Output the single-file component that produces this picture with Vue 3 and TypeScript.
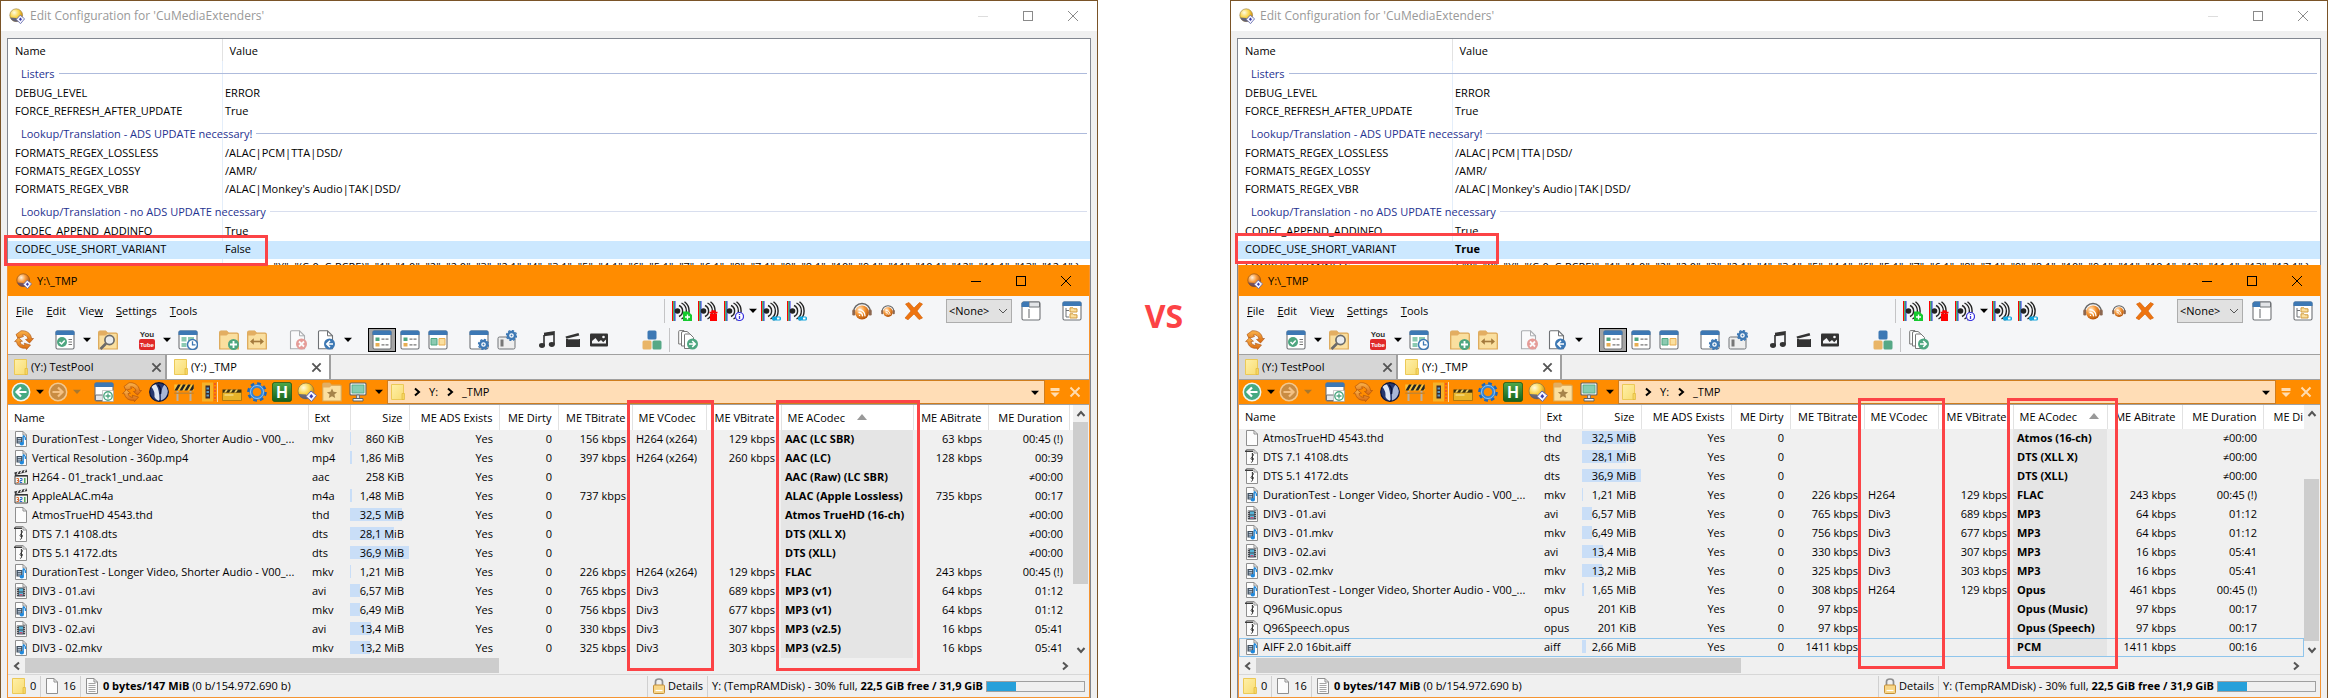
<script setup lang="ts">
interface ConfigLine {
  kind: 'group' | 'item' | 'selected'
  name: string
  value?: string
  faint?: boolean
}

interface MediaFile {
  icon: string
  name: string
  ext: string
  size: string
  bar: number
  tbr?: string
  vcodec?: string
  vbr?: string
  acodec: string
  abr?: string
  duration: string
  focused?: boolean
}

interface Panel {
  id: string
  config: ConfigLine[]
  files: MediaFile[]
  extraColumn: boolean
}

interface Tool {
  kind: 'btn' | 'drop' | 'gap' | 'sep' | 'wide-gap'
  icon?: string
  label?: string
  slot?: string
}

const btn = (icon: string, label: string, slot = 's28'): Tool => ({ kind: 'btn', icon, label, slot })
const drop = (label: string, slot = 'd15'): Tool => ({ kind: 'drop', label, slot })
const gap: Tool = { kind: 'gap' }
const wideGap: Tool = { kind: 'wide-gap' }
const sep: Tool = { kind: 'sep' }

const mediaTools: Tool[] = [
  sep,
  btn('sig-add', 'Add metadata', 's26'),
  btn('sig-del', 'Delete metadata', 's26'),
  btn('sig-info', 'Metadata info', 's26'),
  drop('More metadata commands', 'd11'),
  btn('sig-on', 'Toggle columns', 's26'),
  btn('sig-on', 'Toggle details', 's26'),
]

const playTools: Tool[] = [
  btn('phones', 'Play', 's26'),
  btn('phones-small', 'Play next', 's26'),
  btn('cross', 'Stop', 's26'),
]

const mainTools: Tool[] = [
  btn('refresh', 'Refresh'),
  gap,
  btn('win-check', 'Select'),
  drop('Select menu'),
  btn('folder-find', 'Find'),
  gap,
  btn('youtube', 'YouTube', 's24'),
  drop('YouTube menu'),
  btn('win-clock', 'Recent'),
  gap,
  btn('folder-add', 'New folder'),
  btn('folder-size', 'Calculate size'),
  gap,
  btn('doc-del', 'Delete'),
  btn('doc-undo', 'Undo'),
  drop('Undo menu'),
  gap,
  btn('win-list', 'Details view', 's28 pressed'),
  btn('win-list', 'List view'),
  btn('win-thumbs', 'Thumbnails view'),
  gap,
  btn('win-gear', 'Preferences'),
  btn('doc-gear', 'Folder options'),
  gap,
  btn('music', 'Music', 's26'),
  btn('clapper', 'Video', 's26'),
  btn('picture', 'Pictures', 's26'),
  wideGap,
  btn('blocks', 'Layouts'),
  sep,
  btn('docs-go', 'Copy to'),
]

const pathTools: Tool[] = [
  btn('back', 'Back', 's24'),
  drop('Back history', 'd13'),
  btn('forward', 'Forward', 's24 dim'),
  drop('Forward history', 'd13 dim'),
  btn('win-add', 'New window', 's28 indent'),
  btn('refresh', 'Refresh', 's28'),
  btn('vlogo', 'Viewer', 's25'),
  btn('barrier', 'Work in progress', 's25'),
  btn('film', 'Film tool', 's23'),
  btn('clap-yellow', 'Clips', 's25'),
  btn('gear', 'Settings', 's25'),
  btn('hkey', 'Hotkeys', 's25'),
  btn('ball', 'Script', 's25'),
  btn('folder-star', 'Favorites', 's25'),
  btn('monitor', 'This PC', 's28'),
  drop('Computer menu', 'd13'),
]

const makeConfig = (variant: string): ConfigLine[] => [
  { kind: 'group', name: 'Listers' },
  { kind: 'item', name: 'DEBUG_LEVEL', value: 'ERROR' },
  { kind: 'item', name: 'FORCE_REFRESH_AFTER_UPDATE', value: 'True' },
  { kind: 'group', name: 'Lookup/Translation - ADS UPDATE necessary!' },
  { kind: 'item', name: 'FORMATS_REGEX_LOSSLESS', value: '/ALAC|PCM|TTA|DSD/' },
  { kind: 'item', name: 'FORMATS_REGEX_LOSSY', value: '/AMR/' },
  { kind: 'item', name: 'FORMATS_REGEX_VBR', value: "/ALAC|Monkey's Audio|TAK|DSD/" },
  { kind: 'group', name: 'Lookup/Translation - no ADS UPDATE necessary', faint: true },
  { kind: 'item', name: 'CODEC_APPEND_ADDINFO', value: 'True' },
  { kind: 'selected', name: 'CODEC_USE_SHORT_VARIANT', value: variant },
  {
    kind: 'item',
    name: 'LOOKUP_CHANNELS',
    value: '{ "0": "0",  "X": "(C-0, C-PCRE)",  "1": "1.0",  "2": "2.0",  "3": "2.1",  "4": "3.1",  "5": "4.1",  "6": "5.1",  "7": "6.1",  "8": "7.1",  "9": "8.1",  "10": "9.1",  "11": "10.1",  "12": "11.1",  "13": "12.1" }',
  },
]

const longName = 'DurationTest - Longer Video, Shorter Audio - V00_...'

const leftFiles: MediaFile[] = [
  { icon: 'f-mkv', name: longName, ext: 'mkv', size: '860 KiB', bar: 2, tbr: '156 kbps', vcodec: 'H264 (x264)', vbr: '129 kbps', acodec: 'AAC (LC SBR)', abr: '63 kbps', duration: '00:45 (!)' },
  { icon: 'f-mkv', name: 'Vertical Resolution - 360p.mp4', ext: 'mp4', size: '1,86 MiB', bar: 4, tbr: '397 kbps', vcodec: 'H264 (x264)', vbr: '260 kbps', acodec: 'AAC (LC)', abr: '128 kbps', duration: '00:39' },
  { icon: 'f-aac', name: 'H264 - 01_track1_und.aac', ext: 'aac', size: '258 KiB', bar: 0, acodec: 'AAC (Raw) (LC SBR)', duration: '≠00:00' },
  { icon: 'f-aac', name: 'AppleALAC.m4a', ext: 'm4a', size: '1,48 MiB', bar: 4, tbr: '737 kbps', acodec: 'ALAC (Apple Lossless)', abr: '735 kbps', duration: '00:17' },
  { icon: 'f-blank', name: 'AtmosTrueHD 4543.thd', ext: 'thd', size: '32,5 MiB', bar: 88, acodec: 'Atmos TrueHD (16-ch)', duration: '≠00:00' },
  { icon: 'f-dts', name: 'DTS 7.1 4108.dts', ext: 'dts', size: '28,1 MiB', bar: 75, acodec: 'DTS (XLL X)', duration: '≠00:00' },
  { icon: 'f-dts', name: 'DTS 5.1 4172.dts', ext: 'dts', size: '36,9 MiB', bar: 100, acodec: 'DTS (XLL)', duration: '≠00:00' },
  { icon: 'f-mkv', name: longName, ext: 'mkv', size: '1,21 MiB', bar: 2, tbr: '226 kbps', vcodec: 'H264 (x264)', vbr: '129 kbps', acodec: 'FLAC', abr: '243 kbps', duration: '00:45 (!)' },
  { icon: 'f-avi', name: 'DIV3 - 01.avi', ext: 'avi', size: '6,57 MiB', bar: 17, tbr: '765 kbps', vcodec: 'Div3', vbr: '689 kbps', acodec: 'MP3 (v1)', abr: '64 kbps', duration: '01:12' },
  { icon: 'f-mkv', name: 'DIV3 - 01.mkv', ext: 'mkv', size: '6,49 MiB', bar: 17, tbr: '756 kbps', vcodec: 'Div3', vbr: '677 kbps', acodec: 'MP3 (v1)', abr: '64 kbps', duration: '01:12' },
  { icon: 'f-avi', name: 'DIV3 - 02.avi', ext: 'avi', size: '13,4 MiB', bar: 36, tbr: '330 kbps', vcodec: 'Div3', vbr: '307 kbps', acodec: 'MP3 (v2.5)', abr: '16 kbps', duration: '05:41' },
  { icon: 'f-mkv', name: 'DIV3 - 02.mkv', ext: 'mkv', size: '13,2 MiB', bar: 34, tbr: '325 kbps', vcodec: 'Div3', vbr: '303 kbps', acodec: 'MP3 (v2.5)', abr: '16 kbps', duration: '05:41' },
]

const rightFiles: MediaFile[] = [
  { icon: 'f-blank', name: 'AtmosTrueHD 4543.thd', ext: 'thd', size: '32,5 MiB', bar: 88, acodec: 'Atmos (16-ch)', duration: '≠00:00' },
  { icon: 'f-dts', name: 'DTS 7.1 4108.dts', ext: 'dts', size: '28,1 MiB', bar: 75, acodec: 'DTS (XLL X)', duration: '≠00:00' },
  { icon: 'f-dts', name: 'DTS 5.1 4172.dts', ext: 'dts', size: '36,9 MiB', bar: 100, acodec: 'DTS (XLL)', duration: '≠00:00' },
  { icon: 'f-mkv', name: longName, ext: 'mkv', size: '1,21 MiB', bar: 2, tbr: '226 kbps', vcodec: 'H264', vbr: '129 kbps', acodec: 'FLAC', abr: '243 kbps', duration: '00:45 (!)' },
  { icon: 'f-avi', name: 'DIV3 - 01.avi', ext: 'avi', size: '6,57 MiB', bar: 17, tbr: '765 kbps', vcodec: 'Div3', vbr: '689 kbps', acodec: 'MP3', abr: '64 kbps', duration: '01:12' },
  { icon: 'f-mkv', name: 'DIV3 - 01.mkv', ext: 'mkv', size: '6,49 MiB', bar: 17, tbr: '756 kbps', vcodec: 'Div3', vbr: '677 kbps', acodec: 'MP3', abr: '64 kbps', duration: '01:12' },
  { icon: 'f-avi', name: 'DIV3 - 02.avi', ext: 'avi', size: '13,4 MiB', bar: 36, tbr: '330 kbps', vcodec: 'Div3', vbr: '307 kbps', acodec: 'MP3', abr: '16 kbps', duration: '05:41' },
  { icon: 'f-mkv', name: 'DIV3 - 02.mkv', ext: 'mkv', size: '13,2 MiB', bar: 34, tbr: '325 kbps', vcodec: 'Div3', vbr: '303 kbps', acodec: 'MP3', abr: '16 kbps', duration: '05:41' },
  { icon: 'f-mkv', name: longName, ext: 'mkv', size: '1,65 MiB', bar: 3, tbr: '308 kbps', vcodec: 'H264', vbr: '129 kbps', acodec: 'Opus', abr: '461 kbps', duration: '00:45 (!)' },
  { icon: 'f-dts', name: 'Q96Music.opus', ext: 'opus', size: '201 KiB', bar: 0, tbr: '97 kbps', acodec: 'Opus (Music)', abr: '97 kbps', duration: '00:17' },
  { icon: 'f-dts', name: 'Q96Speech.opus', ext: 'opus', size: '201 KiB', bar: 0, tbr: '97 kbps', acodec: 'Opus (Speech)', abr: '97 kbps', duration: '00:17' },
  { icon: 'f-mkv', name: 'AIFF 2.0 16bit.aiff', ext: 'aiff', size: '2,66 MiB', bar: 7, tbr: '1411 kbps', acodec: 'PCM', abr: '1411 kbps', duration: '00:16', focused: true },
]

const panels: Panel[] = [
  { id: 'long', config: makeConfig('False'), files: leftFiles, extraColumn: false },
  { id: 'short', config: makeConfig('True'), files: rightFiles, extraColumn: true },
]
</script>

<template>
  <main class="page">
    <svg class="defs" aria-hidden="true">
      <defs>
        <radialGradient id="gYellow" cx="35%" cy="30%" r="75%">
          <stop offset="0" stop-color="#fffbe0" /><stop offset=".5" stop-color="#fbd54a" /><stop offset="1" stop-color="#c07a00" />
        </radialGradient>
        <radialGradient id="gOrange" cx="35%" cy="30%" r="75%">
          <stop offset="0" stop-color="#fff0dc" /><stop offset=".45" stop-color="#f89a3a" /><stop offset="1" stop-color="#b04c00" />
        </radialGradient>
        <linearGradient id="gFolder" x1="0" y1="0" x2="1" y2="1">
          <stop offset="0" stop-color="#fff0a8" /><stop offset="1" stop-color="#f8dc72" />
        </linearGradient>
        <linearGradient id="gGreen" x1="0" y1="0" x2="0" y2="1">
          <stop offset="0" stop-color="#4fa84a" /><stop offset="1" stop-color="#15611b" />
        </linearGradient>
        <linearGradient id="gArrow" x1="0" y1="0" x2="0" y2="1">
          <stop offset="0" stop-color="#fbb44c" /><stop offset="1" stop-color="#d8660c" />
        </linearGradient>
      </defs>

      <symbol id="ball" viewBox="0 0 20 20">
        <circle cx="9" cy="9" r="8" fill="url(#gYellow)" stroke="#8d7440" stroke-width=".7" />
        <path d="M1.500 12a8 8 0 0 0 10 4.600L9 12.500Z" fill="#3f4f8c" opacity=".75" />
        <path d="M14 9l5.500 4.500L14.500 19.500 9 14.500Z" fill="#f4f5ff" stroke="#5d64a8" stroke-width="1" />
        <path d="M14.300 12l1.900 2.200-1.900 2.200-1.900-2.200Z" fill="#3c3fae" />
      </symbol>
      <symbol id="ball-orange" viewBox="0 0 20 20">
        <circle cx="9" cy="9" r="8" fill="url(#gOrange)" stroke="#7b4518" stroke-width=".7" />
        <path d="M1.500 12a8 8 0 0 0 10 4.600L9 12.500Z" fill="#4e4170" opacity=".7" />
        <path d="M14 9l5.500 4.500L14.500 19.500 9 14.500Z" fill="#f4f5ff" stroke="#5d64a8" stroke-width="1" />
        <path d="M14.300 12l1.900 2.200-1.900 2.200-1.900-2.200Z" fill="#3c3fae" />
      </symbol>

      <symbol id="refresh" viewBox="0 0 20 20">
        <path d="M4 8.500 2 4.500 7 .8C12 .2 17 3 17.500 8.500L19.500 8.500 15.500 13 11.500 9.500 14 9C13.500 6 11 4.500 8.500 4.800L9.500 6.500Z" fill="url(#gArrow)" stroke="#a84c08" stroke-width=".6" />
        <path d="M.6 11.500 4.400 7.800 8.500 11.200 6 11.600C6.400 14 8.500 15.600 11 15.200L10.200 13.200 16.500 15 12.500 19.600 12 18.200C7 19 3 16 2.600 11.800Z" fill="url(#gArrow)" stroke="#a84c08" stroke-width=".6" />
      </symbol>

      <symbol id="win" viewBox="0 0 20 20">
        <rect x="1" y="1" width="18" height="18" rx="1.500" fill="#fff" stroke="#6f7276" stroke-width="1.100" />
        <path d="M.5 5V2Q.5.5 2 .5H18Q19.500.5 19.500 2V5Z" fill="#3d78b4" />
      </symbol>
      <symbol id="win-check" viewBox="0 0 20 20">
        <use href="#win" />
        <circle cx="7" cy="12" r="5" fill="#4da680" />
        <path d="M4.500 12l2 2 3.200-3.600" fill="none" stroke="#fff" stroke-width="1.500" />
        <path d="M13.500 9.500h3.500M13.500 12h3.500M13.500 14.500h3.500" stroke="#777" />
      </symbol>
      <symbol id="folder" viewBox="0 0 20 20">
        <path d="M.7 19V2.500Q.7 1 2 1H7.500L9.500 3.200H18Q19.300 3.200 19.300 4.500V19Z" fill="#fadf9f" stroke="#dba552" stroke-width="1.200" />
        <path d="M1 5.500V2Q1 1 2 1H7.500L9.800 3.500 7.500 5.500Z" fill="#e3ae62" />
      </symbol>
      <symbol id="folder-find" viewBox="0 0 20 20">
        <use href="#folder" />
        <circle cx="11.500" cy="10" r="4.600" fill="#e9ecef" stroke="#6b6b6b" stroke-width="1.700" />
        <path d="M8 13.500 2.500 19" stroke="#6b6b6b" stroke-width="2.600" />
      </symbol>
      <symbol id="youtube" viewBox="0 0 20 20">
        <rect x="2" y="9" width="16" height="11" rx="2" fill="#e02a2a" />
      </symbol>
      <symbol id="win-clock" viewBox="0 0 20 20">
        <use href="#win" />
        <path d="M3.500 7h5v4.500h-5zM10 7h6v4.500h-6zM3.500 13h5v4h-5z" fill="#8ccab2" />
        <circle cx="14.500" cy="14.500" r="5" fill="#fff" stroke="#3d78b4" stroke-width="1.500" />
        <path d="M14.500 11.300v3.500h3" fill="none" stroke="#3d78b4" stroke-width="1.300" />
      </symbol>
      <symbol id="folder-add" viewBox="0 0 20 20">
        <use href="#folder" />
        <circle cx="14.500" cy="14.500" r="5.500" fill="#4da680" />
        <path d="M14.500 11v7M11 14.500h7" stroke="#fff" stroke-width="1.800" />
      </symbol>
      <symbol id="folder-size" viewBox="0 0 20 20">
        <use href="#folder" />
        <path d="M5 11.500h10" stroke="#a47a3c" stroke-width="1.600" />
        <path d="M3 11.500 6.800 8.300v6.400ZM17 11.500 13.200 8.300v6.400Z" fill="#a47a3c" />
      </symbol>
      <symbol id="sheet" viewBox="0 0 20 20">
        <path d="M2.500 18.800V2Q2.500.8 3.700.8H11.500L16.500 5.800V18.800Z" fill="#fff" stroke="#6f7276" stroke-width="1.100" />
        <path d="M11.500.8V5.800H16.500" fill="none" stroke="#6f7276" />
      </symbol>
      <symbol id="doc-del" viewBox="0 0 20 20">
        <g opacity=".55">
          <use href="#sheet" />
          <circle cx="13.500" cy="14" r="5.500" fill="#d9534a" />
          <path d="M11 11.500l5 5M16 11.500l-5 5" stroke="#fff" stroke-width="1.800" />
        </g>
      </symbol>
      <symbol id="doc-undo" viewBox="0 0 20 20">
        <use href="#sheet" />
        <circle cx="13.500" cy="14" r="5.500" fill="#3d78b4" />
        <path d="M17 14h-5.500M14 10.800 10.800 14l3.200 3.200" fill="none" stroke="#fff" stroke-width="1.600" />
      </symbol>
      <symbol id="win-list" viewBox="0 0 20 20">
        <use href="#win" />
        <path d="M3.500 7.500h4v3.500h-4z" fill="#4da680" /><path d="M3.500 13h4v3.500h-4z" fill="#e8ae52" />
        <path d="M9.500 9.200h3M13.500 9.200h3M9.500 14.800h3M13.500 14.800h3" stroke="#777" stroke-width="1.200" />
      </symbol>
      <symbol id="win-thumbs" viewBox="0 0 20 20">
        <use href="#win" />
        <path d="M3 8.500h6v6.500h-6z" fill="#8ccab2" stroke="#4da680" /><path d="M11 8.500h6v6.500h-6z" fill="#fadf9f" stroke="#e8ae52" />
      </symbol>
      <symbol id="cog" viewBox="0 0 20 20">
        <circle cx="14.500" cy="14.500" r="5" fill="none" stroke="#3d78b4" stroke-width="1.300" stroke-dasharray="2.200 1.700" />
        <circle cx="14.500" cy="14.500" r="3.500" fill="#fff" stroke="#3d78b4" stroke-width="2.400" />
        <circle cx="14.500" cy="14.500" r="1" fill="#3d78b4" />
      </symbol>
      <symbol id="win-gear" viewBox="0 0 20 20">
        <use href="#win" /><use href="#cog" />
      </symbol>
      <symbol id="doc-gear" viewBox="0 0 20 20">
        <rect x="1" y="7" width="17" height="12" rx="1.500" fill="#eee" stroke="#6f7276" />
        <rect x="3.500" y="9.500" width="3" height="7" fill="#777" />
        <use href="#cog" y="-9" />
      </symbol>
      <symbol id="music" viewBox="0 0 20 20">
        <path d="M7 3.500 17 2v12.500" fill="none" stroke="#333" stroke-width="1.600" /><path d="M7 3.200 17 2v3L7 6.300Z" fill="#333" />
        <path d="M7 5v11" stroke="#333" stroke-width="1.600" />
        <ellipse cx="5" cy="15.500" rx="3" ry="2.400" fill="#333" /><ellipse cx="14.800" cy="14.500" rx="3" ry="2.400" fill="#333" />
      </symbol>
      <symbol id="clapper" viewBox="0 0 20 20">
        <path d="M3 9h14v8H3z" fill="#333" /><path d="M2.500 6.500 15.500 3l.8 2.500L3.300 8.800Z" fill="#333" />
        <path d="M5 9.500h11" stroke="#999" stroke-width=".6" />
      </symbol>
      <symbol id="picture" viewBox="0 0 20 20">
        <rect x="1" y="3.500" width="18" height="13" rx="1" fill="#333" />
        <path d="M3 13.500V11l3.500-3 3 4 2.500-2 2.200 2.200L17 9.500v4Z" fill="#f4f5f7" /><circle cx="14.500" cy="7" r="1.300" fill="#f4f5f7" />
      </symbol>
      <symbol id="blocks" viewBox="0 0 20 20">
        <rect x="5.500" y=".5" width="9" height="9" rx="1.500" fill="#3d78b4" />
        <rect x=".5" y="10.500" width="9" height="9" rx="1.500" fill="#e9b567" /><rect x="10.500" y="10.500" width="9" height="9" rx="1.500" fill="#56a886" />
      </symbol>
      <symbol id="docs-go" viewBox="0 0 20 20">
        <path d="M.7 14V1.500Q.7.600 1.600.6H6l2 2V14Z" fill="#fff" stroke="#777" /><path d="M3.500 16V3Q3.500 1.500 5 1.500H9l2.500 2V16Z" fill="#fff" stroke="#777" />
        <path d="M6.500 18.500V5Q6.500 4 7.500 4H12l3.500 3.500V18.500Z" fill="#fff" stroke="#777" />
        <circle cx="14.500" cy="14" r="5.500" fill="#4da680" />
        <path d="M11 14h5.500M14.200 11l3 3-3 3" fill="none" stroke="#fff" stroke-width="1.600" />
      </symbol>

      <symbol id="signal" viewBox="0 0 20 20">
        <path d="M.5 0v20" stroke="#f00" stroke-width="1.500" /><path d="M2 0v20" stroke="#24b04a" stroke-width="1.500" /><path d="M3 0v20" stroke="#2430e8" stroke-width="1" />
        <circle cx="5.500" cy="10" r="2.800" fill="#222" />
        <path d="M7 4.500a6 6 0 0 1 0 11M9.500 2a9 9 0 0 1 0 16M12.500.8a11.500 11.500 0 0 1 0 18.400" fill="none" stroke="#222" stroke-width="1.400" />
      </symbol>
      <symbol id="sig-add" viewBox="0 0 20 20">
        <use href="#signal" /><path d="M11 20v-9.500h5l4 3.500v6Z" fill="#15c92f" /><path d="M15.500 13.500v5M13 16h5" stroke="#fff" stroke-width="1.300" />
      </symbol>
      <symbol id="sig-del" viewBox="0 0 20 20">
        <use href="#signal" /><path d="M11.500 11.500h8M13.500 10h4" stroke="#f00" stroke-width="1.600" /><path d="M12 12.500h7V20h-7Z" fill="#f00" />
      </symbol>
      <symbol id="sig-info" viewBox="0 0 20 20">
        <use href="#signal" /><circle cx="15.500" cy="15.500" r="4" fill="#fff" stroke="#3a34e0" stroke-width="1.200" /><path d="M15.500 13v1M15.500 15v3" stroke="#3a34e0" stroke-width="1.300" />
      </symbol>
      <symbol id="sig-on" viewBox="0 0 20 20">
        <use href="#signal" /><rect x="11" y="15.500" width="9" height="4" rx="1.500" fill="#12a6de" /><rect x="16" y="16.500" width="2.500" height="2" fill="#fff" />
      </symbol>
      <symbol id="phones" viewBox="0 0 20 20">
        <path d="M1.500 11a8.500 8.500 0 0 1 17 0" fill="none" stroke="#666" stroke-width="1.500" />
        <rect x=".3" y="8.500" width="3" height="6" rx="1.300" fill="#8c6750" /><rect x="16.700" y="8.500" width="3" height="6" rx="1.300" fill="#8c6750" />
        <circle cx="10" cy="11.500" r="6.900" fill="url(#gOrange)" />
        <path d="M7.500 14.300v.1M7 11.500a3.500 3.500 0 0 1 3.500 3.300M7 8.700a6 6 0 0 1 6 6.100" fill="none" stroke="#fff" stroke-width="1.300" stroke-linecap="round" />
      </symbol>
      <symbol id="phones-small" viewBox="0 0 20 20"><use href="#phones" x="3" y="3" width="14" height="14" /></symbol>
      <symbol id="cross" viewBox="0 0 20 20">
        <path d="M1.500 3 5 1.500 10 7 15.500 1.500 18.500 3 13 10 18.500 17 15 18.500 10 13 4 18.800 1 17 7 10Z" fill="#ee7410" stroke="#cf5c02" stroke-width=".6" />
      </symbol>
      <symbol id="layout" viewBox="0 0 20 20">
        <rect x="1" y="1" width="18" height="18" rx="1.500" fill="#fff" stroke="#6f7276" stroke-width="1.100" />
        <path d="M8 1h10.500v5H8Z" fill="#e3e5e8" stroke="#6f7276" /><path d="M.5 6V2.500L2.500.5H8V6Z" fill="#3d78b4" /><path d="M8 8v9" stroke="#6f7276" stroke-width="1.100" />
      </symbol>
      <symbol id="tree" viewBox="0 0 20 20">
        <use href="#win" />
        <path d="M4 7v9h3M4 9.500h3" fill="none" stroke="#6f7276" /><path d="M8 6.800h3l1 1h3V11H8ZM8 12.800h3l1 1h3V17H8Z" fill="#fadf9f" stroke="#d19b3e" />
      </symbol>

      <symbol id="back" viewBox="0 0 20 20">
        <circle cx="10" cy="10" r="8.700" fill="#46a982" stroke="#eef8f3" stroke-width="1.500" />
        <path d="M15.500 10H6M10 5.500 5.500 10 10 14.500" fill="none" stroke="#fff" stroke-width="2.200" />
      </symbol>
      <symbol id="forward" viewBox="0 0 20 20">
        <circle cx="10" cy="10" r="8.700" fill="#c98c42" stroke="#f2c890" stroke-width="1.500" />
        <path d="M4.500 10H14M10 5.500 14.500 10 10 14.500" fill="none" stroke="#f4c183" stroke-width="2.200" />
      </symbol>
      <symbol id="win-add" viewBox="0 0 20 20">
        <use href="#win" /><path d="M1.500 13h8v5.500h-8z" fill="#e3e5e8" stroke="#6f7276" />
        <path d="M8.500 8.500h11v11h-11z" fill="#fff" stroke="#999" stroke-width=".5" />
        <circle cx="14" cy="14" r="4.200" fill="#fff" stroke="#4da680" stroke-width="1.400" /><path d="M14 11.500v5M11.500 14h5" stroke="#4da680" stroke-width="1.300" />
      </symbol>
      <symbol id="vlogo" viewBox="0 0 20 20">
        <circle cx="10" cy="10" r="9.300" fill="#27386f" stroke="#0b1338" stroke-width="1.200" />
        <path d="M2.500 5Q4.500 2 7 2.500 10.500 8 10.500 17.500L9.500 18.800Q6.500 17.500 5.500 15 6 9 2.500 5Z" fill="#dfe6f3" />
        <path d="M12 18.500Q11 7 15.500 2.800 18.500 5 18.800 9 18.500 16 12 18.500Z" fill="#a9b6d6" />
        <path d="M9 3Q12.500 6 11.500 12" fill="none" stroke="#0b1338" stroke-width="1.500" />
      </symbol>
      <symbol id="barrier" viewBox="0 0 20 20">
        <path d="M3.500 9v10M16.500 9v10" stroke="#b8b0a4" stroke-width="2" />
        <path d="M.3 2.500h19.400v6H.3z" fill="#f8c23c" /><path d="M.5 8.500 4 2.500h2.800L3.300 8.500ZM5.500 8.500 9 2.500h2.800L8.300 8.500ZM10.500 8.500 14 2.500h2.800L13.300 8.500ZM15.500 8.500 19 2.500h.7v4L18.300 8.500Z" fill="#222" />
        <path d="M.3 10.500h19.400v1.500H.3z" fill="#c9852a" />
      </symbol>
      <symbol id="film" viewBox="0 0 20 20">
        <path d="M4 .5h11v19H4z" fill="#f5b22a" /><path d="M7.500 3.500h4.500v13H7.500z" fill="#3b2c2c" /><path d="M8.500 5.500h2.500v2H8.500zM8.500 9h2.500v2H8.500zM8.500 12.500h2.500v2H8.500z" fill="#5d9bc4" />
        <path d="M17 1v18" stroke="#f05a24" stroke-width="2" stroke-dasharray="2 1.500" /><path d="M19.500 0v20" stroke="#ffd9ab" />
      </symbol>
      <symbol id="clap-yellow" viewBox="0 0 20 20">
        <path d="M.5 10.500h19V18.500H.5z" fill="#e8b429" stroke="#a06e0c" stroke-width=".8" /><path d="M.5 7.500h19v3H.5z" fill="#3a3213" />
        <path d="M2 10.500l2-3h2l-2 3ZM7 10.500l2-3h2l-2 3ZM12 10.500l2-3h2l-2 3Z" fill="#f1cf5f" /><path d="M2.500 13h9" stroke="#f8e08c" stroke-width="1.300" />
      </symbol>
      <symbol id="gear" viewBox="0 0 20 20">
        <circle cx="10" cy="10" r="8.300" fill="none" stroke="#1d66b8" stroke-width="3" stroke-dasharray="3.600 2.900" />
        <circle cx="10" cy="10" r="6" fill="#ff8c00" stroke="#2f82d6" stroke-width="3.400" /><circle cx="10" cy="10" r="6.500" fill="none" stroke="#9bcbf6" stroke-width=".9" />
      </symbol>
      <symbol id="hkey" viewBox="0 0 20 20">
        <rect x=".4" y=".4" width="19.200" height="19.200" rx="2.500" fill="url(#gGreen)" stroke="#135719" stroke-width=".8" />
      </symbol>
      <symbol id="folder-star" viewBox="0 0 20 20">
        <use href="#folder" /><path d="M10 6.500l1.500 3.300 3.600.4-2.700 2.400.8 3.500L10 14.300l-3.200 1.800.8-3.500L4.900 10.200l3.600-.4Z" fill="#a6834a" />
      </symbol>
      <symbol id="monitor" viewBox="0 0 20 20">
        <rect x="2" y="1" width="16" height="12" rx="1" fill="#f2f2f2" stroke="#5f6468" stroke-width="1.100" /><path d="M4 3h12v8H4z" fill="#86cdb1" stroke="#4da680" stroke-width=".8" />
        <path d="M8.500 13h3v3.500h-3z" fill="#ddd" stroke="#5f6468" stroke-width=".8" /><path d="M5 16.500h10v2.500H5z" fill="#f2f2f2" stroke="#5f6468" />
      </symbol>

      <symbol id="dir" viewBox="0 0 14 16">
        <path d="M.5.500H12.500V15.500H.5Z" fill="url(#gFolder)" stroke="#ecc957" /><path d="M11 9.500h2.500V15.500H11Z" fill="#f6d660" stroke="#e0b73c" stroke-width=".7" />
      </symbol>
      <symbol id="f-blank" viewBox="0 0 14 16">
        <path d="M1.500.500H9L12.500 4V15.500H1.500Z" fill="#fcfcfc" stroke="#8f8f8f" /><path d="M9 .5V4h3.500" fill="none" stroke="#8f8f8f" />
      </symbol>
      <symbol id="f-text" viewBox="0 0 14 16">
        <use href="#f-blank" /><path d="M3.500 5.500h7M3.500 7.500h7M3.500 9.500h7M3.500 11.500h7M3.500 13.500h7" stroke="#a5a5a5" />
      </symbol>
      <symbol id="f-mkv" viewBox="0 0 14 16">
        <use href="#f-blank" /><path d="M2.500 6h6v6.500h-6z" fill="#3f4d5c" /><path d="M3.800 7.500h3.400M3.800 9.300h3.400M3.800 11h3.400" stroke="#cfe0f0" stroke-width=".9" />
        <path d="M9.200 4.500v8M9.200 4.500q2.800 1.500 2.300 4.500" fill="none" stroke="#1e88dc" stroke-width="1.300" /><ellipse cx="7.800" cy="12.700" rx="2.200" ry="1.700" fill="#1e88dc" />
      </symbol>
      <symbol id="f-avi" viewBox="0 0 14 16">
        <use href="#f-blank" /><path d="M2.800 4.500h8.400v9H2.800z" fill="#41454c" /><path d="M5 5.500h4v3H5zM5 9.500h4v3H5z" fill="#58b4d8" /><path d="M5.500 11h3v1.500h-3z" fill="#d0567a" />
        <path d="M3.800 5v8.500M10.200 5v8.500" stroke="#ddd" stroke-dasharray="1 1" />
      </symbol>
      <symbol id="f-aac" viewBox="0 0 14 16">
        <path d="M.3 3.500 12.500.5l.7 2.500L1 6Z" fill="#333" /><path d="M3 5l1.500-3M6.500 4.200 8 1.200M10 3.500l1.500-3" stroke="#eee" stroke-width="1.200" />
        <path d="M1 6.500h12.500V15H1z" fill="#f2f2ee" stroke="#444" /><path d="M1 6h12.500v1.600H1z" fill="#333" />
        <path d="M2.500 9.500h2v4h-2M3 11.500h1.500" fill="none" stroke="#e06b2c" /><path d="M6 9.500h2v2H6v2h2.200" fill="none" stroke="#2b6fd0" /><path d="M10.800 9v5" stroke="#35a03c" stroke-width="1.300" />
      </symbol>
      <symbol id="f-dts" viewBox="0 0 14 16">
        <use href="#f-blank" /><path d="M0 1.500h8v1.500H0z" fill="#3a3a3a" /><path d="M7.300 4q2.400 2-.3 4-2 2 0 2.800 1.900.3 1.400-1.400-.8-.8-1.600.3M7.300 4 7.600 12.500q-.7 1.300-1.700.5" fill="none" stroke="#2a2a2a" stroke-width=".9" />
      </symbol>
      <symbol id="lock" viewBox="0 0 14 16">
        <path d="M3.500 8V3.500Q3.500 1 7 1t3.500 2.500V8" fill="none" stroke="#8e8e8e" stroke-width="1.700" /><rect x="1.500" y="7" width="11" height="8.500" rx="1" fill="#f8d687" stroke="#c48f38" /><path d="M3.500 12.500h7" stroke="#fff" stroke-width="1.200" />
      </symbol>
      <symbol id="x-bold" viewBox="0 0 12 12"><path d="M1.500 1.500l9 9M10.500 1.500l-9 9" fill="none" stroke="currentColor" stroke-width="2" /></symbol>
      <symbol id="chev" viewBox="0 0 10 10"><path d="M3 1.500 7 5 3 8.500" fill="none" stroke="currentColor" stroke-width="2" /></symbol>
      <symbol id="tri" viewBox="0 0 10 6"><path d="M1 .8h8L5 5Z" fill="currentColor" /></symbol>
    </svg>

    <template v-for="(panel, index) in panels" :key="panel.id">
      <p v-if="index === 1" class="versus">VS</p>

      <section class="panel" :class="panel.id">
        <header class="config-title">
          <svg class="app-icon"><use href="#ball" /></svg>
          <h1>Edit Configuration for 'CuMediaExtenders'</h1>
          <div class="controls muted">
            <button type="button" aria-label="Minimize"><svg class="ctl"><path class="faint" d="M0 5.500h10" /></svg></button>
            <button type="button" aria-label="Maximize"><svg class="ctl"><rect x=".5" y=".5" width="9" height="9" /></svg></button>
            <button type="button" aria-label="Close"><svg class="ctl"><path d="M0 0l10 10M10 0 0 10" /></svg></button>
          </div>
        </header>

        <div class="config-frame">
          <div class="config-list">
            <table class="config">
              <colgroup><col class="c-key" /><col /></colgroup>
              <thead>
                <tr><th scope="col">Name</th><th scope="col" class="val-head">Value</th></tr>
              </thead>
              <tbody>
                <template v-for="line in panel.config" :key="line.name">
                  <tr v-if="line.kind === 'group'" class="group">
                    <th colspan="2" scope="rowgroup">
                      <span class="group-line" :class="{ pale: line.faint }">{{ line.name }}</span>
                    </th>
                  </tr>
                  <tr v-else :class="line.kind">
                    <td>{{ line.name }}</td>
                    <td>{{ line.value }}</td>
                  </tr>
                </template>
              </tbody>
            </table>
          </div>

          <div class="lister">
            <header class="lister-title">
              <svg class="app-icon"><use href="#ball-orange" /></svg>
              <h2>Y:\_TMP</h2>
              <div class="controls">
                <button type="button" aria-label="Minimize"><svg class="ctl"><path d="M0 5.500h10" /></svg></button>
                <button type="button" aria-label="Maximize"><svg class="ctl"><rect x=".5" y=".5" width="9" height="9" /></svg></button>
                <button type="button" aria-label="Close"><svg class="ctl"><path d="M0 0l10 10M10 0 0 10" /></svg></button>
              </div>
            </header>

            <div class="bars">
              <div class="bar-row">
                <nav class="menu" aria-label="Menu">
                  <button type="button"><u>F</u>ile</button>
                  <button type="button"><u>E</u>dit</button>
                  <button type="button">Vie<u>w</u></button>
                  <button type="button"><u>S</u>ettings</button>
                  <button type="button"><u>T</u>ools</button>
                </nav>
                <div class="tools right-tools">
                  <template v-for="(tool, i) in mediaTools" :key="i">
                    <span v-if="tool.kind === 'sep'" class="sep"></span>
                    <button v-else type="button" :class="['tool', tool.slot]" :aria-label="tool.label">
                      <svg v-if="tool.kind === 'btn'" class="ico"><use :href="'#' + tool.icon" /></svg>
                      <svg v-else class="tri"><use href="#tri" /></svg>
                    </button>
                  </template>
                </div>
                <div class="tools play-tools">
                  <button v-for="tool in playTools" :key="tool.icon" type="button" :class="['tool', tool.slot]" :aria-label="tool.label">
                    <svg class="ico"><use :href="'#' + tool.icon" /></svg>
                  </button>
                </div>
                <div class="select-wrap">
                  <select aria-label="Filter">
                    <option>&lt;None&gt;</option>
                  </select>
                  <svg class="select-chev" viewBox="0 0 10 10"><path d="M1 3l4 4 4-4" fill="none" stroke="#555" /></svg>
                </div>
                <div class="tools end-tools">
                  <button type="button" class="tool s26" aria-label="Layout"><svg class="ico"><use href="#layout" /></svg></button>
                  <button type="button" class="tool s26" aria-label="Folder tree"><svg class="ico"><use href="#tree" /></svg></button>
                </div>
              </div>
              <div class="bar-row tools main-tools">
                <template v-for="(tool, i) in mainTools" :key="i">
                  <span v-if="tool.kind === 'sep' || tool.kind === 'gap' || tool.kind === 'wide-gap'" :class="tool.kind"></span>
                  <button v-else type="button" :class="['tool', tool.slot]" :aria-label="tool.label">
                    <svg v-if="tool.kind === 'btn'" class="ico" viewBox="0 0 20 20">
                      <use :href="'#' + tool.icon" />
                      <template v-if="tool.icon === 'youtube'">
                        <text x="10" y="7" text-anchor="middle" class="yt-top">You</text>
                        <text x="10" y="17" text-anchor="middle" class="yt-bottom">Tube</text>
                      </template>
                    </svg>
                    <svg v-else class="tri"><use href="#tri" /></svg>
                  </button>
                </template>
              </div>
            </div>

            <div class="tabs">
              <div class="tab first">
                <svg class="dir"><use href="#dir" /></svg><span>(Y:) TestPool</span>
                <button type="button" aria-label="Close tab TestPool"><svg><use href="#x-bold" /></svg></button>
              </div>
              <div class="tab active">
                <svg class="dir"><use href="#dir" /></svg><span>(Y:) _TMP</span>
                <button type="button" aria-label="Close tab _TMP"><svg><use href="#x-bold" /></svg></button>
              </div>
            </div>

            <div class="path-bar">
              <button v-for="(tool, i) in pathTools" :key="i" type="button" :class="['tool', tool.slot]" :aria-label="tool.label">
                <svg v-if="tool.kind === 'btn'" class="ico" viewBox="0 0 20 20">
                  <use :href="'#' + tool.icon" />
                  <text v-if="tool.icon === 'hkey'" x="10" y="16" text-anchor="middle" class="hk">H</text>
                </svg>
                <svg v-else class="tri"><use href="#tri" /></svg>
              </button>
              <div class="path-field">
                <svg class="dir"><use href="#dir" /></svg>
                <svg class="chev"><use href="#chev" /></svg>
                <button type="button">Y:</button>
                <svg class="chev"><use href="#chev" /></svg>
                <button type="button">_TMP</button>
                <button type="button" class="path-drop" aria-label="Path history"><svg class="tri"><use href="#tri" /></svg></button>
              </div>
              <button type="button" class="path-end" aria-label="Split"><svg viewBox="0 0 10 12"><path d="M.5 2h9v3h-9zM.5 6.500h9L5 11Z" fill="currentColor" /></svg></button>
              <button type="button" class="path-end" aria-label="Close lister"><svg viewBox="0 0 12 12"><use href="#x-bold" /></svg></button>
            </div>

            <div class="content">
              <table class="files">
                <colgroup>
                  <col /><col class="c42" /><col class="c59" /><col class="c90" /><col class="c59" /><col class="c74" />
                  <col class="c74" /><col class="c75" /><col class="c-acodec" /><col class="c75" /><col class="c81" /><col class="c-rest" />
                </colgroup>
                <thead>
                  <tr>
                    <th scope="col">Name</th>
                    <th scope="col">Ext</th>
                    <th scope="col" class="num">Size</th>
                    <th scope="col" class="num">ME ADS Exists</th>
                    <th scope="col" class="num">ME Dirty</th>
                    <th scope="col" class="num">ME TBitrate</th>
                    <th scope="col">ME VCodec</th>
                    <th scope="col" class="num">ME VBitrate</th>
                    <th scope="col" aria-sort="ascending">ME ACodec<svg class="sort" viewBox="0 0 10 6"><path d="M0 6h10L5 0Z" fill="#999" /></svg></th>
                    <th scope="col" class="num">ME ABitrate</th>
                    <th scope="col" class="num">ME Duration</th>
                    <th scope="col" class="h-rest"><template v-if="panel.extraColumn">ME Di</template></th>
                  </tr>
                </thead>
                <tbody>
                  <tr v-for="(file, i) in panel.files" :key="i" :class="{ focused: file.focused }">
                    <td class="name"><div><svg class="file-icon"><use :href="'#' + file.icon" /></svg>{{ file.name }}</div></td>
                    <td>{{ file.ext }}</td>
                    <td class="size"><div class="size-bar" :style="{ width: file.bar + '%' }"></div><span>{{ file.size }}</span></td>
                    <td class="num">Yes</td>
                    <td class="num">0</td>
                    <td class="num">{{ file.tbr }}</td>
                    <td>{{ file.vcodec }}</td>
                    <td class="num">{{ file.vbr }}</td>
                    <td class="sorted">{{ file.acodec }}</td>
                    <td class="num">{{ file.abr }}</td>
                    <td class="num">{{ file.duration }}</td>
                    <td></td>
                  </tr>
                </tbody>
              </table>
              <div class="vscroll">
                <button type="button" aria-label="Scroll up"><svg class="chev up"><use href="#chev" /></svg></button>
                <div class="vtrack"><div class="vthumb"></div></div>
                <button type="button" aria-label="Scroll down"><svg class="chev down"><use href="#chev" /></svg></button>
              </div>
            </div>

            <div class="hscroll">
              <button type="button" aria-label="Scroll left"><svg class="chev left"><use href="#chev" /></svg></button>
              <div class="htrack"><div class="hthumb"></div></div>
              <button type="button" aria-label="Scroll right"><svg class="chev"><use href="#chev" /></svg></button>
            </div>

            <footer class="status">
              <span class="cell folders"><svg class="dir"><use href="#dir" /></svg>0</span>
              <span class="cell count"><svg class="file-icon"><use href="#f-blank" /></svg>16</span>
              <span class="cell bytes"><svg class="file-icon"><use href="#f-text" /></svg><b>0 bytes/147 MiB</b>&nbsp;(0 b/154.972.690 b)</span>
              <button type="button" class="cell details"><svg class="lock"><use href="#lock" /></svg>Details</button>
              <span class="cell disk">Y: (TempRAMDisk) - 30% full,&nbsp;<b>22,5 GiB free / 31,9 GiB</b></span>
              <span class="meter" role="progressbar" aria-label="Disk usage" aria-valuenow="30"><span class="meter-fill" :style="{ width: '30%' }"></span></span>
            </footer>
          </div>
        </div>

        <div class="mark mark-option"></div>
        <div class="mark mark-vcodec"></div>
        <div class="mark mark-acodec"></div>
      </section>
    </template>
  </main>
</template>

<style>
body {
  background: #fff;
}
</style>

<style scoped>
.page {
  display: grid;
  grid-template-columns: minmax(0, 1fr) 132px minmax(0, 1fr);
  font-family: "Open Sans", "Noto Sans", sans-serif;
  font-size: 11px;
  line-height: 18px;
  color: #000;
  background: #fff;
}
.page * {
  box-sizing: border-box;
}
.defs {
  position: absolute;
  width: 0;
  height: 0;
}
.yt-top {
  font: bold 8px "Liberation Sans", sans-serif;
  fill: #333;
}
.yt-bottom {
  font: bold 6px "Liberation Sans", sans-serif;
  fill: #fff;
}
.hk {
  font: bold 16px "Liberation Sans", sans-serif;
  fill: #fff;
}
button {
  padding: 0;
  border: 0;
  background: none;
  font: inherit;
  color: inherit;
}
h1,
h2 {
  margin: 0;
  font-size: 12px;
  font-weight: 400;
}
.lister-title h2 {
  font-size: 11px;
}
.versus {
  margin: 0;
  padding-top: 294px;
  text-align: center;
  font-size: 32px;
  line-height: 44px;
  font-weight: 700;
  color: #fc4346;
}
.panel {
  position: relative;
  border: 1px solid #7a5428;
  border-bottom: 0;
  background: #f0f0f0;
}

/* Configuration dialog */
.config-title {
  display: flex;
  align-items: center;
  gap: 5px;
  height: 30px;
  padding: 0 10px 0 8px;
  background: #fff;
}
.config-title h1 {
  color: #999;
}
.app-icon {
  width: 16px;
  height: 16px;
}
.controls {
  display: flex;
  gap: 17px;
  margin-left: auto;
}
.controls button {
  width: 28px;
  height: 24px;
  display: grid;
  place-items: center;
}
.ctl {
  width: 10px;
  height: 10px;
  fill: none;
  stroke: #000;
  overflow: visible;
}
.muted .ctl {
  stroke: #8a8a8a;
}
.muted .faint {
  stroke: #ddd;
}
.config-frame {
  margin: 7px 6px 0;
  border: 1px solid #828790;
  border-bottom: 0;
}
.config-list {
  height: 226px;
  overflow: hidden;
  background: #fff;
}
.config {
  width: 100%;
  table-layout: fixed;
  border-collapse: collapse;
  background: linear-gradient(#e4eefa, #e4eefa) 214px 0 / 1px 100% no-repeat;
}
.c-key {
  width: 214px;
}
.config th,
.config td {
  height: 18px;
  padding: 0 0 2px 7px;
  line-height: 16px;
  font-weight: 400;
  text-align: left;
  white-space: nowrap;
}
.config td + td {
  padding-left: 3px;
}
.config thead th {
  height: 22px;
  padding-top: 4px;
}
.config .val-head {
  border-left: 1px solid #e2e2e2;
}
.config .group th {
  height: 24px;
  padding: 1px 3px 0 13px;
}
.group-line {
  display: flex;
  align-items: center;
  gap: 4px;
  color: #1f3290;
}
.group-line::after {
  content: "";
  flex: 1;
  height: 1px;
  background: #aebbdc;
}
.group-line.pale::after {
  background: #d8deee;
}
.selected {
  background: #cce8ff;
}
.short .selected td + td {
  font-weight: 700;
}

/* Lister window */
.lister {
  border: 1px solid #f59432;
  border-top: 0;
  background: #f0f0f0;
}
.long .lister {
  margin-left: -1px;
}
.short .lister {
  margin-right: -1px;
}
.lister-title {
  display: flex;
  align-items: center;
  gap: 5px;
  height: 31px;
  padding: 0 9px 0 8px;
  background: #ff8c00;
}
.bars {
  background: #f5f6f8;
  border-bottom: 1px solid #a0a0a0;
}
.bar-row {
  display: flex;
  align-items: center;
  height: 29px;
}
.menu {
  display: flex;
  gap: 13px;
  padding-left: 8px;
}
.tools {
  display: flex;
  align-items: center;
}
.right-tools {
  margin-left: auto;
}
.play-tools {
  margin-left: 39px;
}
.end-tools {
  gap: 15px;
  padding: 0 4px 0 6px;
}
.main-tools {
  padding-left: 2px;
}
.tool {
  flex: none;
  display: grid;
  place-items: center;
  height: 24px;
}
.ico {
  width: 20px;
  height: 20px;
}
.tri {
  width: 10px;
  height: 6px;
}
.s23 { width: 23px; }
.s24 { width: 24px; }
.s25 { width: 25px; }
.s26 { width: 26px; }
.s28 { width: 28px; }
.d11 { width: 11px; }
.d13 { width: 13px; }
.d15 { width: 15px; }
.dim {
  color: #a8772e;
}
.gap {
  width: 13px;
}
.wide-gap {
  width: 26px;
}
.sep {
  width: 1px;
  height: 24px;
  margin: 0 4px 0 3px;
  background: #c4c4c6;
}
.pressed {
  border: 1px solid #000;
  background: #a5a5a5;
}
.select-wrap {
  display: grid;
  width: 66px;
  margin-left: 19px;
  align-items: center;
}
.select-wrap select {
  grid-area: 1 / 1;
  width: 66px;
  height: 24px;
  padding: 0 2px;
  border: 1px solid #adadad;
  border-radius: 0;
  appearance: none;
  background: #e1e1e1;
  font: inherit;
  color: #000;
}
.select-chev {
  grid-area: 1 / 1;
  justify-self: end;
  width: 10px;
  height: 10px;
  margin-right: 4px;
  pointer-events: none;
}
.dir {
  flex: none;
  width: 14px;
  height: 16px;
}
.tabs {
  display: flex;
  height: 25px;
  border-bottom: 1px solid #a0a0a0;
}
.tab {
  display: flex;
  align-items: center;
  gap: 3px;
  width: 164px;
  padding: 0 7px 0 7px;
  border-right: 2px solid #a0a0a0;
  background: #fff;
}
.tab.first {
  width: 159px;
  padding: 0 3px 0 6px;
  background: #d6d6d6;
}
.tab button {
  display: grid;
  margin-left: auto;
  color: #555;
}
.tab button svg {
  width: 11px;
  height: 11px;
}
.path-bar {
  display: flex;
  align-items: center;
  height: 25px;
  padding: 0 4px 0 1px;
  border-bottom: 1px solid #a0a0a0;
  background: #ff8c00;
}
.indent {
  margin-left: 7px;
}
.path-field {
  flex: 1;
  display: flex;
  align-items: center;
  align-self: stretch;
  margin-left: 2px;
  padding: 0 4px 0 3px;
  border: 1px solid #cf7d1e;
  background: #ffddb6;
}
.path-field > .chev {
  margin: 0 7px;
}
.chev {
  width: 10px;
  height: 10px;
}
.path-drop {
  margin-left: auto;
}
.path-end {
  display: grid;
  place-items: center;
  width: 20px;
  color: #ffdcb0;
}
.path-end svg {
  width: 12px;
  height: 12px;
}

/* File list */
.content {
  display: flex;
  height: 253px;
  background: #f0f0f0;
}
.files {
  flex: 1;
  min-width: 0;
  width: 100%;
  align-self: flex-start;
  table-layout: fixed;
  border-collapse: collapse;
}
.c42 { width: 42px; }
.c59 { width: 59px; }
.c74 { width: 74px; }
.c75 { width: 75px; }
.c81 { width: 81px; }
.c90 { width: 90px; }
.c-acodec { width: 132px; }
.c-rest { width: 4px; }
.short .c-acodec { width: 94px; }
.short .c-rest { width: 41px; }
.files th {
  height: 24px;
  padding: 0 6px;
  border-right: 1px solid #e2e2e2;
  background: #fff;
  font-weight: 400;
  text-align: left;
  white-space: nowrap;
}
.long .files th {
  height: 25px;
}
.files th.h-rest {
  border: 0;
  padding: 0;
}
.short .files th.h-rest {
  padding-left: 10px;
}
.files .num {
  text-align: right;
}
.sort {
  width: 10px;
  height: 6px;
  margin-left: 12px;
  vertical-align: 2px;
}
.files td {
  height: 19px;
  padding: 0 6px 2px 4px;
  line-height: 17px;
  white-space: nowrap;
}
.files .name div {
  display: flex;
  align-items: center;
  gap: 4px;
  padding-left: 2px;
}
.file-icon {
  flex: none;
  width: 14px;
  height: 16px;
}
.files .size {
  padding: 0 0 2px;
}
.size-bar {
  float: left;
  height: 13px;
  margin: 2px -59px 0 0;
  background: #c9def7;
}
.size span {
  position: relative;
  display: block;
  padding-right: 5px;
  text-align: right;
}
.files .sorted {
  background: #e5e5e5;
  font-weight: 700;
}
.focused {
  outline: 1px solid #8fc5ec;
  outline-offset: -1px;
}
.vscroll {
  display: flex;
  flex-direction: column;
  width: 16px;
  color: #555;
}
.vscroll button {
  display: grid;
  place-items: center;
  height: 17px;
}
.vtrack {
  flex: 1;
}
.vthumb {
  height: 74%;
  width: 15px;
  background: #cdcdcd;
}
.short .vtrack {
  display: flex;
  align-items: flex-end;
}
.up { transform: rotate(-90deg); }
.down { transform: rotate(90deg); }
.left { transform: rotate(180deg); }
.hscroll {
  display: flex;
  height: 16px;
  padding-right: 16px;
  color: #555;
}
.hscroll button {
  display: grid;
  place-items: center;
  width: 17px;
}
.htrack {
  flex: 1;
}
.hthumb {
  width: 46%;
  height: 15px;
  background: #cdcdcd;
}
.short .hthumb {
  width: 47%;
}
.status {
  display: flex;
  align-items: center;
  height: 23px;
  padding-right: 4px;
  border-top: 1px solid #d7d7d7;
  white-space: nowrap;
}
.cell {
  display: flex;
  align-items: center;
  height: 21px;
  padding: 0 4px;
}
.cell + .cell {
  border-left: 1px solid #d0d0d0;
}
.cell .dir,
.cell .file-icon {
  margin-right: 4px;
}
.lock {
  width: 14px;
  height: 16px;
  margin-right: 2px;
}
.bytes {
  margin-right: auto;
}
.disk {
  padding-right: 3px;
}
.meter {
  width: 99px;
  height: 11px;
  border: 1px solid #a0a0a0;
  background: #f0f0f0;
}
.meter-fill {
  display: block;
  height: 100%;
  background: #26a0da;
}

/* Red annotations */
.mark {
  position: absolute;
  border: 3px solid #fc4346;
  pointer-events: none;
}
.mark-option {
  left: 3px;
  top: 234px;
  width: 264px;
  height: 31px;
}
.mark-vcodec {
  right: 383px;
  top: 399px;
  width: 87px;
  height: 271px;
}
.mark-acodec {
  right: 177px;
  top: 399px;
  width: 144px;
  height: 271px;
}
.short .mark-option {
  left: 4px;
  top: 232px;
}
.short .mark-vcodec {
  right: 382px;
  top: 397px;
}
.short .mark-acodec {
  right: 209px;
  top: 397px;
  width: 111px;
}
</style>
